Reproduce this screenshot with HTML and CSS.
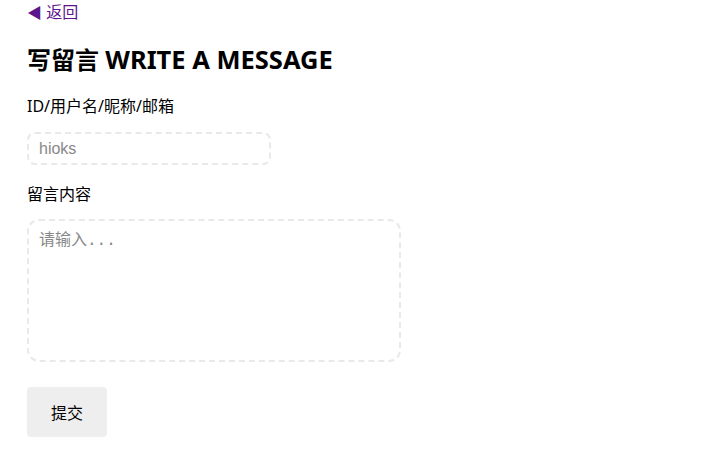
FILE: index.html
```html
<!DOCTYPE html>
<html lang="zh">
<head>
<meta charset="utf-8">
<title>写留言</title>
<link rel="stylesheet" href="styles.css">
</head>
<body>
<main class="page">
  <a class="back" href="#"><span class="back-arrow">◀</span> 返回</a>
  <h1 class="title">写留言 <span class="title-en">WRITE A MESSAGE</span></h1>
  <form class="form">
    <label class="label label-id" for="uid">ID/用户名/昵称/邮箱</label>
    <input class="input" id="uid" type="text" placeholder="hioks">
    <label class="label label-msg" for="msg">留言内容</label>
    <textarea class="textarea" id="msg" placeholder="请输入..."></textarea>
    <button class="submit" type="button">提交</button>
  </form>
</main>
</body>
</html>
```
FILE: styles.css
```css
html, body {
  margin: 0;
  background: #fff;
}
body {
  font-family: "Noto Sans", "Noto Sans CJK SC", sans-serif;
  color: #000;
}
.page {
  padding: 0 0 0 27px;
  display: flex;
  flex-direction: column;
  align-items: flex-start;
}
.back {
  color: #5b148c;
  text-decoration: none;
  font-size: 16px;
  line-height: 24px;
  height: 24px;
}
.back-arrow {
  font-size: 15px;
  line-height: 1;
}
.title {
  font-size: 24px;
  font-weight: 700;
  margin: 20px 0 0;
  line-height: 32px;
  height: 32px;
}
.title-en {
  font-size: 25.5px;
  line-height: 1;
}
.form {
  display: flex;
  flex-direction: column;
  align-items: flex-start;
}
.label {
  font-size: 16px;
  line-height: 24px;
}
.label-id { margin-top: 18px; }
.label-msg { margin-top: 17px; }
.input {
  margin-top: 14px;
  width: 244px;
  height: 33px;
  box-sizing: border-box;
  border: 2px dashed #e9e9e9;
  border-radius: 8px;
  padding: 0 10px;
  font-family: "Liberation Sans", Arial, sans-serif;
  font-size: 16px;
  outline: none;
}
.input::placeholder { color: #888; }
.textarea {
  margin-top: 13px;
  width: 374px;
  height: 143px;
  box-sizing: border-box;
  border: 2px dashed #e9e9e9;
  border-radius: 12px;
  padding: 9px 10px;
  font-family: "Liberation Mono", "Noto Sans CJK SC", monospace;
  font-size: 16px;
  line-height: 22px;
  resize: none;
  outline: none;
}
.textarea::placeholder { color: #888; }
.submit {
  margin-top: 25px;
  width: 80px;
  height: 50px;
  border: none;
  border-radius: 4px;
  background: #eeeeee;
  font-family: "Noto Sans CJK SC", sans-serif;
  font-size: 16px;
  color: #000;
  padding: 0;
}
```
